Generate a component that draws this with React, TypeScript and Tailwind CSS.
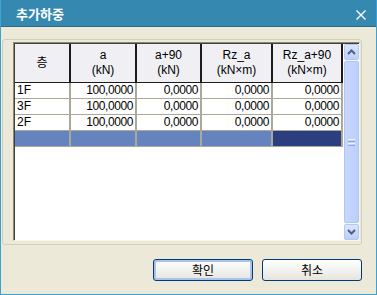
const cols = [
  { w: "w-[56px]", title: ["층"] },
  { w: "w-[66px]", title: ["a", "(kN)"] },
  { w: "w-[65px]", title: ["a+90", "(kN)"] },
  { w: "w-[71px]", title: ["Rz_a", "(kN×m)"] },
  { w: "w-[70px]", title: ["Rz_a+90", "(kN×m)"] },
];

const rows = [
  ["1F", "100,0000", "0,0000", "0,0000", "0,0000"],
  ["3F", "100,0000", "0,0000", "0,0000", "0,0000"],
  ["2F", "100,0000", "0,0000", "0,0000", "0,0000"],
];

const font = "font-['Liberation_Sans','Noto_Sans_CJK_KR',sans-serif]";

const Chevron = ({ up }: { up?: boolean }) => (
  <svg width="9" height="6" viewBox="0 0 9 6">
    <path
      d={up ? "M1 5 L4.5 1.5 L8 5" : "M1 1 L4.5 4.5 L8 1"}
      fill="none"
      stroke="#4d6185"
      strokeWidth="2"
    />
  </svg>
);

const ScrollBar = () => (
  <div className="w-[15px] flex flex-col gap-[1px] bg-[#f4f5fd]">
    <div className="h-[16px] rounded-[2px] border border-[#b4c7f4] bg-gradient-to-b from-[#dbe5fd] to-[#bccffb] flex items-center justify-center">
      <Chevron up />
    </div>
    <div className="flex-1 rounded-[2px] border border-[#b1c4f2] bg-gradient-to-r from-[#c7d7fd] to-[#bccffb] flex flex-col items-center justify-center gap-[1px]">
      <div className="w-[7px] h-px bg-[#eef3fe]" />
      <div className="w-[7px] h-px bg-[#8ca6e4]" />
      <div className="w-[7px] h-px bg-[#eef3fe]" />
      <div className="w-[7px] h-px bg-[#8ca6e4]" />
    </div>
    <div className="h-[16px] rounded-[2px] border border-[#b4c7f4] bg-gradient-to-b from-[#dbe5fd] to-[#bccffb] flex items-center justify-center">
      <Chevron />
    </div>
  </div>
);

export default function App() {
  return (
    <div className={`w-[377px] h-[295px] bg-[#ece9d8] border-x border-b border-[#3aa3d4] flex flex-col ${font}`}>
      {/* 타이틀바 */}
      <div className="h-[27px] bg-[#3589b1] border-b border-[#2b6a88] flex items-center justify-between pl-[15px] pr-[10px]">
        <span className="text-white text-[13px] font-bold font-['Noto_Sans_CJK_KR',sans-serif] pt-[1px]">추가하중</span>
        <svg width="10" height="10" viewBox="0 0 10 10" className="mt-[3px]">
          <path d="M0.5 0.5 L9.5 9.5 M9.5 0.5 L0.5 9.5" stroke="white" strokeWidth="1.4" />
        </svg>
      </div>

      {/* 그룹박스 */}
      <div className="mt-[12px] ml-px w-[360px] h-[206px] rounded-[3px] border border-[#d0cebf] pl-[10px] pt-[2px]">
        <div className="w-[347px] h-[199px] border-l border-t border-[#8b887a] border-r border-b border-r-[#f5f4ea] border-b-[#f5f4ea]">
          <div className="h-full border-l border-t border-[#404040] bg-white flex">
            {/* 표 */}
            <div className="flex-1 flex flex-col text-[12px] text-black">
              <div className="flex h-[39px]">
                {cols.map((c, i) => (
                  <div
                    key={i}
                    className={`${c.w} bg-[#efeff4] border-r-2 border-b border-[#1c1c1c] flex flex-col items-center justify-center leading-[15px]`}
                  >
                    {c.title.map((t) => (
                      <span key={t}>{t}</span>
                    ))}
                  </div>
                ))}
              </div>
              {rows.map((r, ri) => (
                <div key={ri} className="flex h-[16px]">
                  {r.map((v, ci) => (
                    <div
                      key={ci}
                      className={`${cols[ci].w} border-r-2 border-b border-[#aca899] leading-[15px] ${ci === 0 ? "pl-[2px]" : "text-right pr-[2px] tracking-[-0.4px]"}`}
                    >
                      {v}
                    </div>
                  ))}
                </div>
              ))}
              <div className="flex h-[16px]">
                {cols.map((c, ci) => (
                  <div
                    key={ci}
                    className={`${c.w} border-r-2 border-b border-[#aca899] ${ci === 4 ? "bg-[#2b3f80]" : "bg-[#6584bf]"}`}
                  />
                ))}
              </div>
            </div>
            <ScrollBar />
          </div>
        </div>
      </div>

      {/* 버튼 */}
      <div className="mt-[14px] flex justify-end gap-[9px] pr-[14px]">
        <button className="w-[100px] h-[22px] rounded-[3px] border border-[#003c74] bg-gradient-to-b from-white to-[#e6e5de] shadow-[inset_0_0_0_2px_#a9c3ef] text-[12px] text-black font-['Noto_Sans_CJK_KR',sans-serif]">
          확인
        </button>
        <button className="w-[100px] h-[22px] rounded-[3px] border border-[#003c74] bg-gradient-to-b from-white to-[#e6e5de] text-[12px] text-black font-['Noto_Sans_CJK_KR',sans-serif]">
          취소
        </button>
      </div>
    </div>
  );
}
